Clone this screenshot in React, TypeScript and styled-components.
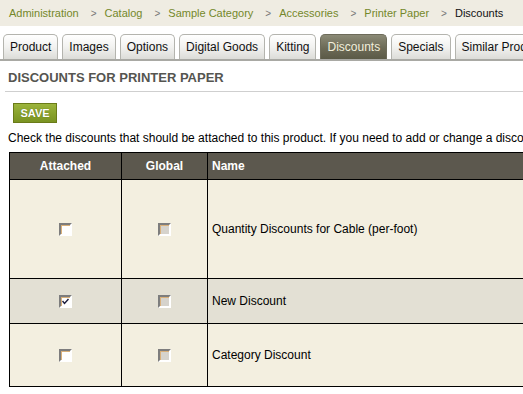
import React from 'react';
import styled, { createGlobalStyle } from "styled-components";

const GlobalStyle = createGlobalStyle`
  body {
    margin: 0;
    background: #ffffff;
    font-family: "Liberation Sans", Arial, sans-serif;
    overflow: hidden;
  }
`

const Page = styled.div`
  width: 523px;
  height: 394px;
  overflow: hidden;
  font-size: 12px;
  color: #000;
`

const Breadcrumb = styled.div`
  display: flex;
  align-items: center;
  height: 26px;
  padding-left: 9px;
  background: #efece2;
  font-size: 11px;
  white-space: nowrap;
  
  .crumb {
    color: #74882a;
  }
  .current {
    color: #111;
  }
  .sep {
    color: #777;
    font-size: 10px;
    margin: 0 8px 0 12px;
  }
`

const TabRow = styled.div`
  display: flex;
  gap: 4px;
  margin-top: 8px;
  padding-left: 3px;
  border-bottom: 2px solid #a9a9a4;
  white-space: nowrap;
`

const Tab = styled.div<{ $active?: boolean }>`
  height: 24px;
  line-height: 25px;
  padding: 0 6px;
  border: 1px solid ${p => p.$active ? '#6d6b5a' : '#b4b4ae'};
  border-bottom: none;
  border-radius: 5px 5px 0 0;
  flex-shrink: 0;
  color: ${p => p.$active ? '#f2efdc' : '#111'};
  background: ${p => p.$active
    ? 'linear-gradient(to bottom, #8b8a76 0%, #6c6a56 55%, #5b5a47 100%)'
    : 'linear-gradient(to bottom, #ffffff 0%, #f2f2f0 50%, #dcdcd8 100%)'};
`

const Heading = styled.h1`
  margin: 10px 0 0 5px;
  padding: 0 0 7px 3px;
  font-size: 13px;
  font-weight: bold;
  color: #555550;
  border-bottom: 1px solid #cfcfcf;
  white-space: nowrap;
  line-height: 13px;
`

const SaveButton = styled.button`
  display: block;
  margin: 11px 0 0 13px;
  width: 44px;
  height: 20px;
  padding: 0;
  border: 1px solid #6a7b18;
  background: linear-gradient(to bottom, #9cb43c 0%, #86a02a 60%, #7a9322 100%);
  color: #fff;
  font-family: "Liberation Sans", Arial, sans-serif;
  font-weight: bold;
  font-size: 11px;
  text-shadow: 0 0 1px #50600c;
`

const Instructions = styled.p`
  margin: 8px 0 0 8px;
  white-space: nowrap;
  line-height: 14px;
`

const Table = styled.table`
  margin: 7px 0 0 9px;
  width: 620px;
  border-collapse: collapse;
  border: 1px solid #000;
  border-right: none;

  th {
    background: #5c584e;
    color: #fff;
    font-weight: bold;
    height: 26px;
    padding: 0 4px;
    border: 1px solid #000;
    text-align: center;
  }
  th.name {
    text-align: left;
  }
  td {
    border: 1px solid #000;
    padding: 0 4px;
  }
`

const Row = styled.tr<{ $alt?: boolean; $h: number }>`
  height: ${p => p.$h}px;
  background: ${p => p.$alt ? '#e3e0d4' : '#f3efe0'};
`

const CenterCell = styled.td`
  text-align: center;
  vertical-align: middle;
`

const Check = styled.span<{ $disabled?: boolean }>`
  display: inline-block;
  position: relative;
  vertical-align: middle;
  width: 9px;
  height: 9px;
  border-style: solid;
  border-width: 2px;
  border-color: #7d7d7d #ffffff #ffffff #7d7d7d;
  box-shadow: inset 1px 1px 0 #d9b07a;
  background: ${p => p.$disabled ? '#d6d3cc' : '#ffffff'};

  svg {
    position: absolute;
    left: 1px;
    top: 1px;
  }
`

const Box = ({ checked, disabled }: { checked?: boolean; disabled?: boolean }) => (
    <Check $disabled={disabled}>
        {checked && (
            <svg width="7" height="7" viewBox="0 0 7 7">
                <path d="M0.5 3 L2.5 5.5 L6.5 1" stroke="#1a1a3a" strokeWidth="1.4" fill="none" />
            </svg>
        )}
    </Check>
);

const discounts = [
    { name: "Quantity Discounts for Cable (per-foot)", attached: false, h: 99 },
    { name: "New Discount", attached: true, h: 45 },
    { name: "Category Discount", attached: false, h: 63 },
];

const tabs = ["Product", "Images", "Options", "Digital Goods", "Kitting", "Discounts", "Specials", "Similar Products"];

const App = () => {
    return (
        <Page>
            <GlobalStyle />
            <Breadcrumb>
                <span className="crumb">Administration</span><span className="sep">&gt;</span>
                <span className="crumb">Catalog</span><span className="sep">&gt;</span>
                <span className="crumb">Sample Category</span><span className="sep">&gt;</span>
                <span className="crumb">Accessories</span><span className="sep">&gt;</span>
                <span className="crumb">Printer Paper</span><span className="sep">&gt;</span>
                <span className="current">Discounts</span>
            </Breadcrumb>
            <TabRow>
                {tabs.map(t => <Tab key={t} $active={t === "Discounts"}>{t}</Tab>)}
            </TabRow>
            <Heading>DISCOUNTS FOR PRINTER PAPER</Heading>
            <SaveButton>SAVE</SaveButton>
            <Instructions>
                Check the discounts that should be attached to this product. If you need to add or change a discount, use the discounts page.
            </Instructions>
            <Table>
                <thead>
                    <tr>
                        <th style={{ width: 103 }}>Attached</th>
                        <th style={{ width: 77 }}>Global</th>
                        <th className="name">Name</th>
                    </tr>
                </thead>
                <tbody>
                    {discounts.map((d, i) => (
                        <Row key={d.name} $alt={i === 1} $h={d.h}>
                            <CenterCell><Box checked={d.attached} /></CenterCell>
                            <CenterCell><Box disabled /></CenterCell>
                            <td>{d.name}</td>
                        </Row>
                    ))}
                </tbody>
            </Table>
        </Page>
    );
};

export default App;
